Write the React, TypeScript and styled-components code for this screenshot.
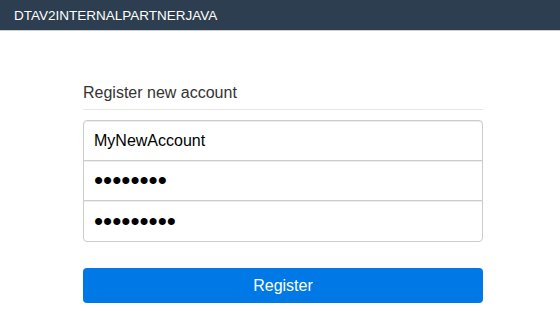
import React from 'react';
import styled, { createGlobalStyle } from 'styled-components';

const GlobalStyle = createGlobalStyle`
  html, body {
    margin: 0;
    padding: 0;
    background: #fff;
    font-family: "Liberation Sans", Arial, sans-serif;
  }
`;

const TopBar = styled.header`
  height: 31px;
  background: #2c3e50;
  border-bottom: 1px solid #c9ccd0;
  box-sizing: border-box;
  display: flex;
  align-items: center;
  padding-left: 14px;
  color: #fff;
  font-size: 13.5px;
`;

const Main = styled.main`
  padding: 51px 0 0 83px;
`;

const Form = styled.form`
  width: 400px;
  display: flex;
  flex-direction: column;
`;

const Heading = styled.h2`
  margin: 0;
  font-size: 16px;
  font-weight: normal;
  color: #333;
  line-height: 22px;
  padding-bottom: 5px;
  border-bottom: 1px solid #e5e5e5;
`;

const Fields = styled.div`
  margin-top: 10px;
  display: flex;
  flex-direction: column;
`;

type Pos = 'first' | 'middle' | 'last';

const Field = styled.input<{ $pos: Pos; $secret?: boolean }>`
  box-sizing: border-box;
  height: ${({ $pos }) => ($pos === 'last' ? '42px' : '41px')};
  width: 100%;
  padding: 0 10px;
  font-size: ${({ $secret }) => ($secret ? '26px' : '16px')};
  font-family: "Liberation Sans", Arial, sans-serif;
  color: #000;
  border: 1px solid #ccc;
  background: #fff;
  box-shadow: inset 0 1px 1px rgba(0, 0, 0, 0.075);
  outline: none;
  margin-top: ${({ $pos }) => ($pos === 'first' ? '0' : '-1px')};
  border-radius: ${({ $pos }) =>
    $pos === 'first' ? '4px 4px 0 0' : $pos === 'last' ? '0 0 4px 4px' : '0'};
`;

const Submit = styled.button`
  margin-top: 26px;
  height: 35px;
  width: 100%;
  border: none;
  border-radius: 4px;
  background: #0079e6;
  color: #fff;
  font-size: 16px;
  font-family: "Liberation Sans", Arial, sans-serif;
`;

export default function App() {
  return (
    <>
      <GlobalStyle />
      <TopBar>DTAV2INTERNALPARTNERJAVA</TopBar>
      <Main>
        <Form onSubmit={(e) => e.preventDefault()}>
          <Heading>Register new account</Heading>
          <Fields>
            <Field $pos="first" type="text" defaultValue="MyNewAccount" />
            <Field $pos="middle" $secret type="password" defaultValue="12345678" />
            <Field $pos="last" $secret type="password" defaultValue="123456789" />
          </Fields>
          <Submit type="submit">Register</Submit>
        </Form>
      </Main>
    </>
  );
}
